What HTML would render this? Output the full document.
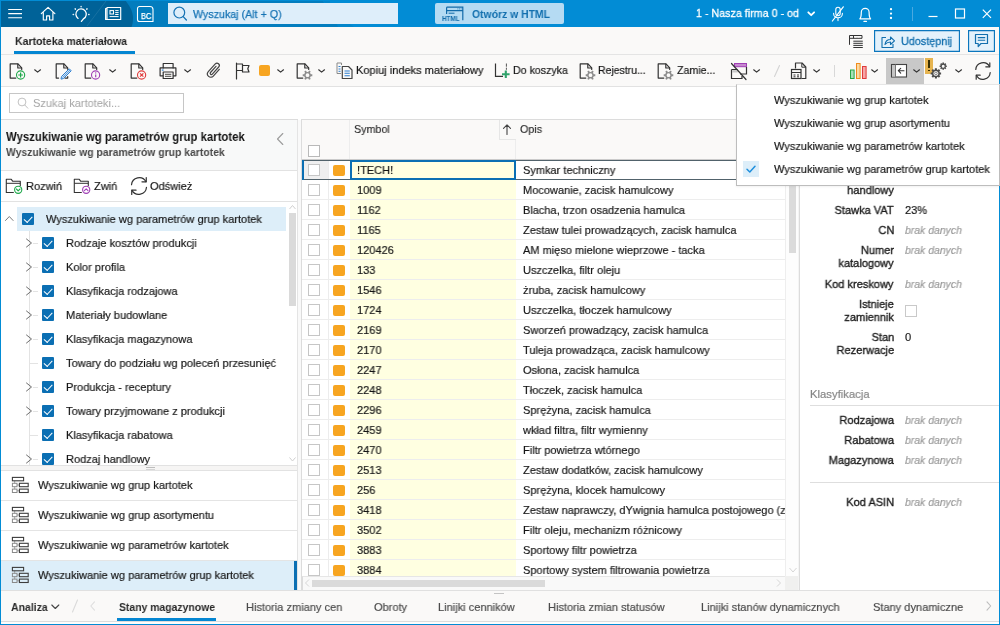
<!DOCTYPE html>
<html lang="pl">
<head>
<meta charset="utf-8">
<title>Kartoteka materiałowa</title>
<style>
*{box-sizing:border-box;margin:0;padding:0}
html,body{width:1000px;height:625px;overflow:hidden;background:#fff}
body{font-family:"Liberation Sans",sans-serif;font-size:12px;color:#151515;position:relative}
.abs{position:absolute}
#win{position:absolute;left:0;top:0;width:1000px;height:625px;background:#fff;overflow:hidden}
.tx{will-change:transform;position:absolute;line-height:16px;white-space:nowrap;transform-origin:0 50%;display:block}
.cb{position:absolute;width:12px;height:12px;background:#0b6fb3;border-radius:1px}
.cb:after{content:"";position:absolute;left:2.4px;top:2.5px;width:7px;height:3.7px;border-left:1.7px solid #fff;border-bottom:1.7px solid #fff;transform:rotate(-47deg)}
.ub{position:absolute;width:12px;height:12px;background:#fff;border:1px solid #c6c6c6}
.or{position:absolute;width:12px;height:11px;background:#f7a521;border-radius:2px}

</style>
</head>
<body>
<div id="win">
<div class="abs" style="left:0px;top:0px;width:1000px;height:27px;background:#028cd5"></div>
<svg class="abs" style="left:0px;top:0px;" width="360" height="27" viewBox="0 0 360 27" fill="none"><path d="M322 0C330 8 344 20 354 27H330V0Z" fill="#0285ca"/><path d="M0 0H322C328 8 334 18 338 27H0Z" fill="#037dbe"/><path d="M0 0H125C129 5 133 11 133 18C133 22 132.500 25 131.500 27H0Z" fill="#006298"/></svg>
<svg class="abs" style="left:7px;top:7px;" width="17" height="14" viewBox="0 0 17 14" fill="none"><path d="M1.200 2.500H15M1.200 6.600H15M1.200 10.700H15" stroke="#fff" stroke-width="1.100"/></svg>
<svg class="abs" style="left:39px;top:5px;" width="18" height="17" viewBox="0 0 18 17" fill="none"><path d="M2.300 8.700L9.100 2.300L15.900 8.700M4.300 7.300V15H7.600V10.800H10.600V15H13.900V7.300" stroke="#fff" stroke-width="1.150" stroke-linecap="round" stroke-linejoin="round"/></svg>
<svg class="abs" style="left:70px;top:3px;" width="22" height="21" viewBox="0 0 22 21" fill="none"><path d="M11.400 18.400L13.700 15.600A5.200 5.200 0 1 0 8.100 15.400" stroke="#fff" stroke-width="1.250" stroke-linecap="round"/><path d="M11.100 3.500V3.800M5.200 5.900L5.400 6.100M17 5.900L16.800 6.100M3.200 11.400H3.500M18.700 11.400H19" stroke="#fff" stroke-width="1.500" stroke-linecap="round" opacity="0.9"/></svg>
<svg class="abs" style="left:84px;top:0px;" width="24" height="27" viewBox="0 0 24 27" fill="none"><path d="M22 1L3 26" stroke="#fff" stroke-width="1" opacity="0.090"/></svg>
<svg class="abs" style="left:104px;top:5px;" width="19" height="17" viewBox="0 0 19 17" fill="none"><path d="M3 3.500H1.600V14.500H16.700V2.500H3V14.300" stroke="#fff" stroke-width="1.150" stroke-linejoin="round"/><rect x="6" y="5.600" width="3.500" height="3.400" stroke="#fff" stroke-width="1.050"/><path d="M11.200 5.600H14.600M11.200 7.600H14.600M11.200 9.500H14.600M5.600 11.600H14.600" stroke="#fff" stroke-width="1"/></svg>
<svg class="abs" style="left:136px;top:5px;" width="18" height="18" viewBox="0 0 18 18" fill="none"><path d="M3.500 1.500H14A3 3 0 0 1 17 4.500V16.500H3.500A2 2 0 0 1 1.500 14.500V3.500A2 2 0 0 1 3.500 1.500Z" stroke="#fff" stroke-width="1.100"/></svg>
<span class="tx" style="top:8.29px;font-size:8.8px;color:#fff;-webkit-text-stroke:0.25px;left:141.30px;transform:scaleX(0.86);">BC</span>
<div class="abs" style="left:168px;top:3px;width:230px;height:21px;background:#deeefa"></div>
<svg class="abs" style="left:171px;top:5px;" width="18" height="18" viewBox="0 0 18 18" fill="none"><circle cx="8.3" cy="7.6" r="5.4" stroke="#1673b4" stroke-width="1.2"/><path d="M12.2 11.6L15.4 15" stroke="#1673b4" stroke-width="1.3" stroke-linecap="round"/></svg>
<span class="tx" style="top:6.26px;font-size:11.33px;color:#1673b4;-webkit-text-stroke:0.25px;left:192.50px;transform:scaleX(0.9428);">Wyszukaj (Alt + Q)</span>
<div class="abs" style="left:435px;top:3px;width:129px;height:21px;background:#b5dbf3;border-radius:2px"></div>
<svg class="abs" style="left:441px;top:5px;" width="24" height="18" viewBox="0 0 24 18" fill="none"><path d="M5.600 2.200H21.800V15.200M5.600 2.200V9M5.600 5.600H21.800" stroke="#126aa8" stroke-width="1.200"/><path d="M16.500 3.900H17.300M18.100 3.900H18.900M19.700 3.900H20.500" stroke="#126aa8" stroke-width="0.900"/><path d="M7.600 8.200H13.500" stroke="#126aa8" stroke-width="1"/></svg>
<span class="tx" style="top:11.29px;font-size:7px;font-weight:bold;color:#126aa8;left:442.30px;transform:scaleX(0.9);">HTML</span>
<span class="tx" style="top:6.26px;font-size:11.33px;font-weight:bold;color:#126fae;left:472.00px;transform:scaleX(0.9184);">Otwórz w HTML</span>
<span class="tx" style="top:5.26px;font-size:11.33px;color:#fff;-webkit-text-stroke:0.3px;left:695.50px;transform:scaleX(0.946);">1 - Nasza firma 0 - od</span>
<svg class="abs" style="left:806px;top:9px;" width="12" height="10" viewBox="0 0 12 10" fill="none"><path d="M2.300 3.300L5.200 6.200L8.100 3.300" stroke="#fff" stroke-width="1.800" stroke-linecap="round" stroke-linejoin="round"/></svg>
<svg class="abs" style="left:828px;top:4px;" width="20" height="20" viewBox="0 0 20 20" fill="none"><path d="M10 3.2A2.2 2.2 0 0 1 12.2 5.400V9.6A2.200 2.200 0 0 1 7.800 9.6V5.400A2.200 2.200 0 0 1 10 3.200ZM5.600 9.400A4.400 4.400 0 0 0 14.400 9.400M10 14V16.6" stroke="#fff" stroke-width="1.1" stroke-linecap="round"/><path d="M15.300 2.800L4.400 17" stroke="#fff" stroke-width="1.2" stroke-linecap="round"/></svg>
<svg class="abs" style="left:856px;top:4px;" width="20" height="20" viewBox="0 0 20 20" fill="none"><path d="M3.800 14.800C5.300 13.300 5.300 11.500 5.300 8.200A3.900 3.900 0 0 1 13.100 8.200C13.100 11.500 13.100 13.300 14.600 14.800Z" stroke="#fff" stroke-width="1.200" stroke-linejoin="round"/><path d="M8 17.400H10.400" stroke="#fff" stroke-width="1.300" stroke-linecap="round"/></svg>
<svg class="abs" style="left:886px;top:5px;" width="10" height="18" viewBox="0 0 10 18" fill="none"><circle cx="5" cy="4.200" r="1.150" fill="#fff"/><circle cx="5" cy="8.600" r="1.150" fill="#fff"/><circle cx="5" cy="13" r="1.150" fill="#fff"/></svg>
<div class="abs" style="left:912px;top:7px;width:1px;height:14px;background:#4aa9e0"></div>
<svg class="abs" style="left:926px;top:6px;" width="16" height="16" viewBox="0 0 16 16" fill="none"><path d="M2.500 10.500H11.500" stroke="#fff" stroke-width="1.2"/></svg>
<svg class="abs" style="left:952px;top:6px;" width="16" height="16" viewBox="0 0 16 16" fill="none"><rect x="3.500" y="3" width="9" height="9" stroke="#fff" stroke-width="1.2"/></svg>
<svg class="abs" style="left:979px;top:6px;" width="16" height="16" viewBox="0 0 16 16" fill="none"><path d="M3.800 3.600L12 11.800M12 3.600L3.800 11.800" stroke="#fff" stroke-width="1.200"/></svg>
<div class="abs" style="left:0px;top:27px;width:1000px;height:28px;background:#faf9f8;border-bottom:1px solid #e4e4e4"></div>
<span class="tx" style="top:33.26px;font-size:11.33px;font-weight:bold;color:#242424;left:15.00px;transform:scaleX(0.9269);">Kartoteka materiałowa</span>
<div class="abs" style="left:14px;top:51px;width:121px;height:3px;background:#0486d2"></div>
<svg class="abs" style="left:848px;top:33px;" width="16" height="16" viewBox="0 0 16 16" fill="none"><path d="M1.500 2.500V11.800M1.500 2.500H14V5.300H1.500M5.500 2.500V5.300" stroke="#333" stroke-width="1"/><path d="M7 3.900H13" stroke="#faf9f8" stroke-width="1" stroke-dasharray="1.200 1.800"/><path d="M5.300 8.200H14.800M5.300 10.300H14.800M5.300 12.400H14.800M5.300 14.500H14.800" stroke="#333" stroke-width="1"/></svg>
<div class="abs" style="left:874px;top:30px;width:86px;height:22px;box-shadow:inset 0 0 0 1.150px #0b76bd;background:#e3f1fb"></div>
<svg class="abs" style="left:878.8px;top:32.5px;" width="18" height="17" viewBox="0 0 18 17" fill="none"><path d="M7 4.500H3V14.500H14V11" stroke="#126fae" stroke-width="1.1" stroke-linejoin="round"/><path d="M6 11.500C6.500 8 9 6.500 11.500 6.500V4L15.500 7.800L11.500 11.500V9C9 9 7.500 9.800 6 11.500Z" stroke="#126fae" stroke-width="1.1" stroke-linejoin="round"/></svg>
<span class="tx" style="top:33.26px;font-size:11.33px;color:#126fae;-webkit-text-stroke:0.3px;left:901.00px;transform:scaleX(0.9534);">Udostępnij</span>
<div class="abs" style="left:968px;top:30px;width:26.8px;height:22px;box-shadow:inset 0 0 0 1.150px #0b76bd;background:#e3f1fb"></div>
<svg class="abs" style="left:972px;top:32px;" width="19" height="17" viewBox="0 0 19 17" fill="none"><path d="M3.500 2.500H15.500V11.500H9L6.200 14.500V11.500H3.500Z" stroke="#126fae" stroke-width="1.200" stroke-linejoin="round"/><path d="M5.800 5.600H13.200M5.800 8.300H13.200" stroke="#126fae" stroke-width="1.100"/></svg>
<div class="abs" style="left:0px;top:55px;width:1000px;height:32px;background:#faf9f8;border-bottom:1px solid #e2e2e2"></div>
<svg class="abs" style="left:9px;top:62.5px;" width="22" height="19" viewBox="0 0 22 19" fill="none"><path d="M12.700 6.500V4.800L9 0.900H1.200V15.100H6.800" stroke="#333" stroke-width="1.2" stroke-linejoin="round" stroke-linecap="round"/><path d="M8.800 1.100V5H12.500" stroke="#333" stroke-width="1.2" stroke-linejoin="round" stroke-linecap="round" stroke-width="1"/><circle cx="11.600" cy="12" r="4.100" stroke="#1ea84a" stroke-width="1.100" fill="#faf9f8"/><path d="M9.200 12H14M11.600 9.600V14.400" stroke="#1ea84a" stroke-width="1.200"/></svg>
<svg class="abs" style="left:33px;top:68.3px;" width="10" height="6" viewBox="0 0 10 6" fill="none"><path d="M1.700 1.800L4.600 4.100L7.500 1.800" stroke="#333" stroke-width="1.200" stroke-linecap="round" stroke-linejoin="round"/></svg>
<svg class="abs" style="left:55px;top:62.5px;" width="22" height="19" viewBox="0 0 22 19" fill="none"><path d="M12.700 6.300V4.800L9 0.900H1.200V15.100H3.600" stroke="#333" stroke-width="1.2" stroke-linejoin="round" stroke-linecap="round"/><path d="M8.800 1.100V5H12.500" stroke="#333" stroke-width="1.2" stroke-linejoin="round" stroke-linecap="round" stroke-width="1"/><path d="M10 15.100H12.700V13.500" stroke="#333" stroke-width="1.2" stroke-linejoin="round" stroke-linecap="round"/><path d="M6 16.100L6.500 13.500L14.200 5.800L16.200 7.800L8.500 15.500Z" stroke="#2d7fd0" stroke-width="1" stroke-linejoin="round" fill="#cfe3f7"/><path d="M7.600 14.500L15.200 6.800" stroke="#2d7fd0" stroke-width="0.700"/></svg>
<svg class="abs" style="left:84px;top:62.5px;" width="22" height="19" viewBox="0 0 22 19" fill="none"><path d="M12.700 6.500V4.800L9 0.900H1.200V15.100H6.800" stroke="#333" stroke-width="1.2" stroke-linejoin="round" stroke-linecap="round"/><path d="M8.800 1.100V5H12.500" stroke="#333" stroke-width="1.2" stroke-linejoin="round" stroke-linecap="round" stroke-width="1"/><circle cx="11.600" cy="12" r="4.100" stroke="#a03fb5" stroke-width="1.100" fill="#faf9f8"/><path d="M11.700 11.500V14.300" stroke="#a03fb5" stroke-width="1.200"/><circle cx="11.700" cy="9.900" r="0.700" fill="#a03fb5"/></svg>
<svg class="abs" style="left:108px;top:68.3px;" width="10" height="6" viewBox="0 0 10 6" fill="none"><path d="M1.700 1.800L4.600 4.100L7.500 1.800" stroke="#333" stroke-width="1.200" stroke-linecap="round" stroke-linejoin="round"/></svg>
<svg class="abs" style="left:130px;top:62.5px;" width="22" height="19" viewBox="0 0 22 19" fill="none"><path d="M12.700 6.500V4.800L9 0.900H1.200V15.100H6.800" stroke="#333" stroke-width="1.2" stroke-linejoin="round" stroke-linecap="round"/><path d="M8.800 1.100V5H12.500" stroke="#333" stroke-width="1.2" stroke-linejoin="round" stroke-linecap="round" stroke-width="1"/><circle cx="11.600" cy="12" r="4.100" stroke="#e03a3a" stroke-width="1.100" fill="#faf9f8"/><path d="M10 10.300L13.400 13.700M13.400 10.300L10 13.700" stroke="#e03a3a" stroke-width="1.200"/></svg>
<svg class="abs" style="left:159px;top:61px;" width="20" height="19" viewBox="0 0 20 19" fill="none"><path d="M4.200 6.900V2.500H14.100V6.900" stroke="#333" stroke-width="1.2" stroke-linejoin="round" stroke-linecap="round"/><rect x="1.100" y="6.900" width="15.800" height="7.900" stroke="#333" stroke-width="1.2" stroke-linejoin="round" stroke-linecap="round"/><rect x="4.200" y="11" width="9.900" height="6.500" stroke="#333" stroke-width="1.2" stroke-linejoin="round" stroke-linecap="round" fill="#faf9f8"/><path d="M6 13.300H12.300M6 15.300H12.300" stroke="#333" stroke-width="0.900"/><path d="M2.800 9.100H4.600" stroke="#2d7fd0" stroke-width="1.200"/></svg>
<svg class="abs" style="left:182.5px;top:68.3px;" width="10" height="6" viewBox="0 0 10 6" fill="none"><path d="M1.700 1.800L4.600 4.100L7.500 1.800" stroke="#333" stroke-width="1.200" stroke-linecap="round" stroke-linejoin="round"/></svg>
<svg class="abs" style="left:204px;top:60px;" width="20" height="21" viewBox="0 0 20 21" fill="none"><path d="M15.300 9.300L9.300 16.100A3.300 3.300 0 0 1 4.300 11.700L11.300 3.900A2.300 2.300 0 0 1 14.700 7L8.300 14.100A1.200 1.200 0 0 1 6.500 12.500L12 6.300" stroke="#444" stroke-width="1.200" stroke-linecap="round" stroke-linejoin="round"/></svg>
<svg class="abs" style="left:234px;top:61px;" width="19" height="20" viewBox="0 0 19 20" fill="none"><path d="M2.500 2V18M2.500 3H8.500V4.500H15L13.800 7.700L15 11H8.500V9.500H2.500M8.500 4.500V9.500" stroke="#333" stroke-width="1.200" stroke-linejoin="round" stroke-linecap="round"/></svg>
<div class="abs" style="left:259px;top:65px;width:11px;height:11px;background:#f7a521;border-radius:2px"></div>
<svg class="abs" style="left:275.5px;top:68.3px;" width="10" height="6" viewBox="0 0 10 6" fill="none"><path d="M1.700 1.800L4.600 4.100L7.500 1.800" stroke="#333" stroke-width="1.200" stroke-linecap="round" stroke-linejoin="round"/></svg>
<svg class="abs" style="left:296px;top:62.5px;" width="22" height="19" viewBox="0 0 22 19" fill="none"><path d="M12.700 6.500V4.800L9 0.900H1.200V15.100H6.800" stroke="#333" stroke-width="1.2" stroke-linejoin="round" stroke-linecap="round"/><path d="M8.800 1.100V5H12.500" stroke="#333" stroke-width="1.2" stroke-linejoin="round" stroke-linecap="round" stroke-width="1"/><g transform="translate(11.500,12.200)" stroke="#8c8c8c"><path d="M-4.800 0H4.800M-2.400 -4.160L2.400 4.160M-2.400 4.160L2.400 -4.160" stroke-width="1.900"/><circle r="2.600" fill="#faf9f8" stroke-width="1.400"/></g></svg>
<svg class="abs" style="left:316.8px;top:68.3px;" width="10" height="6" viewBox="0 0 10 6" fill="none"><path d="M1.700 1.800L4.600 4.100L7.500 1.800" stroke="#333" stroke-width="1.200" stroke-linecap="round" stroke-linejoin="round"/></svg>
<svg class="abs" style="left:335px;top:61px;" width="20" height="20" viewBox="0 0 20 20" fill="none"><path d="M6.500 4V2H2V12.500H6" stroke="#8a8a8a" stroke-width="1"/><path d="M3.500 5.500H5.500M3.500 8H5.500M3.500 10.300H5.500" stroke="#2d7fd0" stroke-width="1"/><path d="M7.300 5.500H13.500L17 9V17.500H7.300Z" stroke="#444" stroke-width="1.200" stroke-linejoin="round" fill="#faf9f8"/><path d="M9.500 10H14.800M9.500 12.300H14.800M9.500 14.700H14.800" stroke="#2d7fd0" stroke-width="1.100"/></svg>
<span class="tx" style="top:62.26px;font-size:11.33px;-webkit-text-stroke:0.18px;left:356.40px;transform:scaleX(0.9735);">Kopiuj indeks materiałowy</span>
<svg class="abs" style="left:493px;top:61px;" width="20" height="20" viewBox="0 0 20 20" fill="none"><path d="M2.500 2.500V15.400H10" stroke="#333" stroke-width="1.200"/><path d="M13.400 2.500V8.800" stroke="#555" stroke-width="1" stroke-dasharray="3.200 1"/><path d="M9 13.200H16.600M12.800 9.400V17" stroke="#2fa36b" stroke-width="2.100"/></svg>
<span class="tx" style="top:62.26px;font-size:11.33px;-webkit-text-stroke:0.18px;left:513.30px;transform:scaleX(0.9375);">Do koszyka</span>
<svg class="abs" style="left:578.5px;top:62.5px;" width="22" height="19" viewBox="0 0 22 19" fill="none"><path d="M12.700 6.500V4.800L9 0.900H1.200V15.100H6.800" stroke="#333" stroke-width="1.2" stroke-linejoin="round" stroke-linecap="round"/><path d="M8.800 1.100V5H12.500" stroke="#333" stroke-width="1.2" stroke-linejoin="round" stroke-linecap="round" stroke-width="1"/><g transform="translate(11.500,12.200)" stroke="#8c8c8c"><path d="M-4.800 0H4.800M-2.400 -4.160L2.400 4.160M-2.400 4.160L2.400 -4.160" stroke-width="1.900"/><circle r="2.600" fill="#faf9f8" stroke-width="1.400"/></g></svg>
<span class="tx" style="top:62.26px;font-size:11.33px;-webkit-text-stroke:0.18px;left:598.00px;transform:scaleX(0.9237);">Rejestru...</span>
<svg class="abs" style="left:657px;top:62.5px;" width="22" height="19" viewBox="0 0 22 19" fill="none"><path d="M12.700 6.500V4.800L9 0.900H1.200V15.100H6.800" stroke="#333" stroke-width="1.2" stroke-linejoin="round" stroke-linecap="round"/><path d="M8.800 1.100V5H12.500" stroke="#333" stroke-width="1.2" stroke-linejoin="round" stroke-linecap="round" stroke-width="1"/><g transform="translate(11.500,12.200)" stroke="#8c8c8c"><path d="M-4.800 0H4.800M-2.400 -4.160L2.400 4.160M-2.400 4.160L2.400 -4.160" stroke-width="1.900"/><circle r="2.600" fill="#faf9f8" stroke-width="1.400"/></g></svg>
<span class="tx" style="top:62.26px;font-size:11.33px;-webkit-text-stroke:0.18px;left:677.00px;transform:scaleX(0.9375);">Zamie...</span>
<svg class="abs" style="left:729px;top:61px;" width="21" height="21" viewBox="0 0 21 21" fill="none"><rect x="5.500" y="2.500" width="12" height="3.200" fill="#c689d0" stroke="#a03fb5" stroke-width="1"/><path d="M17.500 6V13H11" stroke="#333" stroke-width="1.200"/><path d="M2.500 8.500H8.500M2.500 8.500V17.500H13V15" stroke="#333" stroke-width="1.200"/><rect x="3.200" y="9.200" width="5.500" height="2.300" fill="#c9c9c9"/><path d="M2.500 2.500L17 18.500" stroke="#333" stroke-width="1.200" stroke-linecap="round"/></svg>
<svg class="abs" style="left:751.5px;top:68.3px;" width="10" height="6" viewBox="0 0 10 6" fill="none"><path d="M1.700 1.800L4.600 4.100L7.500 1.800" stroke="#333" stroke-width="1.200" stroke-linecap="round" stroke-linejoin="round"/></svg>
<svg class="abs" style="left:772px;top:64px;" width="10" height="14" viewBox="0 0 10 14" fill="none"><path d="M7.500 1.500L2.500 12.500" stroke="#d4d4d4" stroke-width="1.100" stroke-linecap="round"/></svg>
<svg class="abs" style="left:789px;top:61px;" width="20" height="20" viewBox="0 0 20 20" fill="none"><path d="M6.500 7.500V2H13L16.800 6V17.500H12.500" stroke="#333" stroke-width="1.200" stroke-linejoin="round"/><path d="M12.800 2.200V6.200H16.600" stroke="#333" stroke-width="1" stroke-linejoin="round"/><rect x="2.500" y="8.500" width="9.500" height="9" stroke="#333" stroke-width="1.200" fill="#faf9f8"/><path d="M2.500 11.500H12M4.500 14H6.500M8 14H10M4.500 15.800H6.500M8 15.800H10" stroke="#333" stroke-width="1"/></svg>
<svg class="abs" style="left:811.5px;top:68.3px;" width="10" height="6" viewBox="0 0 10 6" fill="none"><path d="M1.700 1.800L4.600 4.100L7.500 1.800" stroke="#333" stroke-width="1.200" stroke-linecap="round" stroke-linejoin="round"/></svg>
<div class="abs" style="left:834px;top:65px;width:1px;height:12px;background:#d8d8d8"></div>
<svg class="abs" style="left:849px;top:62px;" width="19" height="18" viewBox="0 0 19 18" fill="none"><rect x="1.500" y="8" width="3.600" height="8.500" fill="#a8e0b7" stroke="#28a745" stroke-width="1"/><rect x="7.500" y="1.500" width="3.600" height="15" fill="#fbd9a0" stroke="#f08c1e" stroke-width="1"/><rect x="13.500" y="4.500" width="3.600" height="12" fill="#f6a6a6" stroke="#e03a3a" stroke-width="1"/></svg>
<svg class="abs" style="left:870px;top:68.3px;" width="10" height="6" viewBox="0 0 10 6" fill="none"><path d="M1.700 1.800L4.600 4.100L7.500 1.800" stroke="#333" stroke-width="1.200" stroke-linecap="round" stroke-linejoin="round"/></svg>
<div class="abs" style="left:886px;top:58px;width:37.5px;height:26.5px;background:#c8c8c8"></div>
<svg class="abs" style="left:889px;top:62px;" width="20" height="18" viewBox="0 0 20 18" fill="none"><rect x="2.500" y="2.500" width="15" height="12.500" fill="#fff" stroke="#444" stroke-width="1.100"/><rect x="3" y="3" width="3.500" height="11.500" fill="#c4c4c4"/><path d="M6.500 2.500V15" stroke="#777" stroke-width="1"/><path d="M15 8.700H9.500M11.700 6.300L9.300 8.700L11.700 11.100" stroke="#333" stroke-width="1.100" stroke-linecap="round" stroke-linejoin="round"/></svg>
<svg class="abs" style="left:911.5px;top:68.3px;" width="10" height="6" viewBox="0 0 10 6" fill="none"><path d="M1.700 1.800L4.600 4.100L7.500 1.800" stroke="#333" stroke-width="1.200" stroke-linecap="round" stroke-linejoin="round"/></svg>
<div class="abs" style="left:925px;top:58px;width:8px;height:15.5px;background:#e6b450"></div>
<div class="abs" style="left:928.3px;top:60px;width:1.7px;height:8px;background:#3a3000"></div>
<div class="abs" style="left:928.3px;top:69.5px;width:1.7px;height:1.8px;background:#3a3000"></div>
<svg class="abs" style="left:930px;top:61px;" width="19" height="20" viewBox="0 0 19 20" fill="none"><g stroke="#4c4c4c" fill="none"><g transform="translate(5.900,12.400)"><path d="M0 -5.200V5.200M-5.200 0H5.200M-3.680 -3.680L3.680 3.680M-3.680 3.680L3.680 -3.680" stroke-width="2"/><circle r="3.200" fill="#faf9f8" stroke-width="1.500"/><circle r="1.300" fill="#faf9f8" stroke-width="0.600"/></g><g transform="translate(13.200,5.200)"><path d="M0 -3.600V3.600M-3.600 0H3.600M-2.550 -2.550L2.550 2.550M-2.550 2.550L2.550 -2.550" stroke-width="1.600"/><circle r="2.100" fill="#faf9f8" stroke-width="1.200"/></g></g></svg>
<svg class="abs" style="left:953.5px;top:68.3px;" width="10" height="6" viewBox="0 0 10 6" fill="none"><path d="M1.700 1.800L4.600 4.100L7.500 1.800" stroke="#333" stroke-width="1.200" stroke-linecap="round" stroke-linejoin="round"/></svg>
<svg class="abs" style="left:973px;top:61px;" width="20" height="20" viewBox="0 0 20 20" fill="none"><path d="M2.800 8.500A7.300 7.300 0 0 1 16.500 5.500M17.200 11.500A7.300 7.300 0 0 1 3.500 14.500" stroke="#333" stroke-width="1.200" stroke-linecap="round"/><path d="M16.800 1.800V5.800H12.800M3.200 18.200V14.200H7.200" stroke="#333" stroke-width="1.200" stroke-linecap="round" stroke-linejoin="round"/></svg>
<div class="abs" style="left:0px;top:87px;width:1000px;height:33px;background:#fff"></div>
<div class="abs" style="left:9px;top:93px;width:175px;height:20px;border:1px solid #c6c6c6;background:#fff"></div>
<svg class="abs" style="left:16px;top:96px;" width="14" height="14" viewBox="0 0 14 14" fill="none"><circle cx="6" cy="6" r="3.900" stroke="#c2c2c2" stroke-width="1"/><path d="M8.800 9L11.800 12.200" stroke="#c2c2c2" stroke-width="1" stroke-linecap="round"/></svg>
<span class="tx" style="top:94.66px;font-size:11.33px;color:#a6a6a6;-webkit-text-stroke:0.05px;left:33.00px;transform:scaleX(0.9746);">Szukaj kartoteki...</span>
<div class="abs" style="left:0px;top:119px;width:298px;height:52px;background:#f8f9f9;border-top:1px solid #dcdcdc;border-bottom:1px solid #e2e2e2"></div>
<span class="tx" style="top:128.84px;font-size:12.6px;font-weight:bold;color:#141414;left:6.30px;transform:scaleX(0.901);">Wyszukiwanie wg parametrów grup kartotek</span>
<span class="tx" style="top:144.27px;font-size:11.3px;font-weight:bold;color:#484848;left:6.30px;transform:scaleX(0.92);">Wyszukiwanie wg parametrów grup kartotek</span>
<svg class="abs" style="left:274.3px;top:131px;" width="12" height="16" viewBox="0 0 12 16" fill="none"><path d="M8.800 2.500L3.500 8L8.800 13.500" stroke="#9c9c9c" stroke-width="1.100" stroke-linecap="round" stroke-linejoin="round"/></svg>
<div class="abs" style="left:0px;top:171px;width:298px;height:31px;background:#fff;border-bottom:1px solid #e2e2e2"></div>
<svg class="abs" style="left:5px;top:177px;" width="20" height="19" viewBox="0 0 20 19" fill="none"><path d="M15.300 9V4.300H7.800L6.300 2.300H1.300V15.500H8.800" stroke="#333" stroke-width="1.100" stroke-linejoin="round"/><path d="M1.300 6.300H15.300" stroke="#333" stroke-width="1"/><g transform="translate(13.200,12.800)"><circle r="3.600" stroke="#1ea84a" stroke-width="1.100" fill="#fff"/><path d="M-1.800 -0.800L0 1L1.800 -0.800" stroke="#1ea84a" stroke-width="1.100" stroke-linecap="round" stroke-linejoin="round"/></g></svg>
<span class="tx" style="top:177.66px;font-size:11.33px;-webkit-text-stroke:0.18px;left:25.50px;transform:scaleX(0.9746);">Rozwiń</span>
<svg class="abs" style="left:73px;top:177px;" width="20" height="19" viewBox="0 0 20 19" fill="none"><path d="M15.300 9V4.300H7.800L6.300 2.300H1.300V15.500H8.800" stroke="#333" stroke-width="1.100" stroke-linejoin="round"/><path d="M1.300 6.300H15.300" stroke="#333" stroke-width="1"/><g transform="translate(13.200,12.800)"><circle r="3.600" stroke="#a03fb5" stroke-width="1.100" fill="#fff"/><path d="M-1.800 0.800L0 -1L1.800 0.800" stroke="#a03fb5" stroke-width="1.100" stroke-linecap="round" stroke-linejoin="round"/></g></svg>
<span class="tx" style="top:177.66px;font-size:11.33px;-webkit-text-stroke:0.18px;left:93.70px;transform:scaleX(0.9746);">Zwiń</span>
<svg class="abs" style="left:128px;top:175px;" width="22" height="22" viewBox="0 0 20 20" fill="none"><path d="M3.200 8.800A7 7 0 0 1 16.300 6M16.800 11.200A7 7 0 0 1 3.700 14" stroke="#333" stroke-width="1.100" stroke-linecap="round"/><path d="M16.600 2.300V6.200H12.700M3.400 17.700V13.800H7.300" stroke="#333" stroke-width="1.100" stroke-linecap="round" stroke-linejoin="round"/></svg>
<span class="tx" style="top:177.66px;font-size:11.33px;-webkit-text-stroke:0.18px;left:149.50px;transform:scaleX(0.9746);">Odśwież</span>
<div class="abs" style="left:0;top:0;width:298px;height:465px;overflow:hidden;clip-path:inset(202px 0 0 0)"><div class="abs" style="left:17px;top:207px;width:269px;height:24px;background:#ddeef9"></div><div class="abs" style="left:29px;top:231px;width:1px;height:235px;background:#e3e3e3"></div><svg class="abs" style="left:4px;top:214px;" width="11" height="9" viewBox="0 0 11 9" fill="none"><path d="M1.500 6.500L5.300 2.500L9.100 6.500" stroke="#7a7a7a" stroke-width="1" stroke-linecap="round" stroke-linejoin="round"/></svg><div class="cb" style="left:22px;top:213px"></div><span class="tx" style="top:211.26px;font-size:11.33px;-webkit-text-stroke:0.18px;left:45.70px;transform:scaleX(0.9746);">Wyszukiwanie wg parametrów grup kartotek</span><div class="abs" style="left:33px;top:243px;width:5px;height:1px;background:#e3e3e3"></div><svg class="abs" style="left:24px;top:237px;" width="10" height="12" viewBox="0 0 10 12" fill="none"><path d="M2.500 2L7.500 6L2.500 10" stroke="#6e6e6e" stroke-width="1" stroke-linecap="round" stroke-linejoin="round"/></svg><div class="cb" style="left:42px;top:237px"></div><span class="tx" style="top:235.26px;font-size:11.33px;-webkit-text-stroke:0.18px;left:65.70px;transform:scaleX(0.9746);">Rodzaje kosztów produkcji</span><div class="abs" style="left:33px;top:267px;width:5px;height:1px;background:#e3e3e3"></div><svg class="abs" style="left:24px;top:261px;" width="10" height="12" viewBox="0 0 10 12" fill="none"><path d="M2.500 2L7.500 6L2.500 10" stroke="#6e6e6e" stroke-width="1" stroke-linecap="round" stroke-linejoin="round"/></svg><div class="cb" style="left:42px;top:261px"></div><span class="tx" style="top:259.26px;font-size:11.33px;-webkit-text-stroke:0.18px;left:65.70px;transform:scaleX(0.9746);">Kolor profila</span><div class="abs" style="left:33px;top:291px;width:5px;height:1px;background:#e3e3e3"></div><svg class="abs" style="left:24px;top:285px;" width="10" height="12" viewBox="0 0 10 12" fill="none"><path d="M2.500 2L7.500 6L2.500 10" stroke="#6e6e6e" stroke-width="1" stroke-linecap="round" stroke-linejoin="round"/></svg><div class="cb" style="left:42px;top:285px"></div><span class="tx" style="top:283.26px;font-size:11.33px;-webkit-text-stroke:0.18px;left:65.70px;transform:scaleX(0.9746);">Klasyfikacja rodzajowa</span><div class="abs" style="left:33px;top:315px;width:5px;height:1px;background:#e3e3e3"></div><svg class="abs" style="left:24px;top:309px;" width="10" height="12" viewBox="0 0 10 12" fill="none"><path d="M2.500 2L7.500 6L2.500 10" stroke="#6e6e6e" stroke-width="1" stroke-linecap="round" stroke-linejoin="round"/></svg><div class="cb" style="left:42px;top:309px"></div><span class="tx" style="top:307.26px;font-size:11.33px;-webkit-text-stroke:0.18px;left:65.70px;transform:scaleX(0.9746);">Materiały budowlane</span><div class="abs" style="left:33px;top:339px;width:5px;height:1px;background:#e3e3e3"></div><svg class="abs" style="left:24px;top:333px;" width="10" height="12" viewBox="0 0 10 12" fill="none"><path d="M2.500 2L7.500 6L2.500 10" stroke="#6e6e6e" stroke-width="1" stroke-linecap="round" stroke-linejoin="round"/></svg><div class="cb" style="left:42px;top:333px"></div><span class="tx" style="top:331.26px;font-size:11.33px;-webkit-text-stroke:0.18px;left:65.70px;transform:scaleX(0.9746);">Klasyfikacja magazynowa</span><div class="abs" style="left:29px;top:363px;width:9px;height:1px;background:#e3e3e3"></div><div class="cb" style="left:42px;top:357px"></div><span class="tx" style="top:355.26px;font-size:11.33px;-webkit-text-stroke:0.18px;left:65.70px;transform:scaleX(0.9746);">Towary do podziału wg poleceń przesunięć</span><div class="abs" style="left:33px;top:387px;width:5px;height:1px;background:#e3e3e3"></div><svg class="abs" style="left:24px;top:381px;" width="10" height="12" viewBox="0 0 10 12" fill="none"><path d="M2.500 2L7.500 6L2.500 10" stroke="#6e6e6e" stroke-width="1" stroke-linecap="round" stroke-linejoin="round"/></svg><div class="cb" style="left:42px;top:381px"></div><span class="tx" style="top:379.26px;font-size:11.33px;-webkit-text-stroke:0.18px;left:65.70px;transform:scaleX(0.9746);">Produkcja - receptury</span><div class="abs" style="left:33px;top:411px;width:5px;height:1px;background:#e3e3e3"></div><svg class="abs" style="left:24px;top:405px;" width="10" height="12" viewBox="0 0 10 12" fill="none"><path d="M2.500 2L7.500 6L2.500 10" stroke="#6e6e6e" stroke-width="1" stroke-linecap="round" stroke-linejoin="round"/></svg><div class="cb" style="left:42px;top:405px"></div><span class="tx" style="top:403.26px;font-size:11.33px;-webkit-text-stroke:0.18px;left:65.70px;transform:scaleX(0.9746);">Towary przyjmowane z produkcji</span><div class="abs" style="left:29px;top:435px;width:9px;height:1px;background:#e3e3e3"></div><div class="cb" style="left:42px;top:429px"></div><span class="tx" style="top:427.26px;font-size:11.33px;-webkit-text-stroke:0.18px;left:65.70px;transform:scaleX(0.9746);">Klasyfikacja rabatowa</span><div class="abs" style="left:33px;top:459px;width:5px;height:1px;background:#e3e3e3"></div><svg class="abs" style="left:24px;top:453px;" width="10" height="12" viewBox="0 0 10 12" fill="none"><path d="M2.500 2L7.500 6L2.500 10" stroke="#6e6e6e" stroke-width="1" stroke-linecap="round" stroke-linejoin="round"/></svg><div class="cb" style="left:42px;top:453px"></div><span class="tx" style="top:451.26px;font-size:11.33px;-webkit-text-stroke:0.18px;left:65.70px;transform:scaleX(0.9746);">Rodzaj handlowy</span><div class="abs" style="left:288.5px;top:212.5px;width:7.5px;height:93px;background:#dadada"></div><svg class="abs" style="left:288px;top:203px;" width="9" height="8" viewBox="0 0 9 8" fill="none"><path d="M1.500 6L4.500 2.500L7.500 6" stroke="#d0d0d0" stroke-width="1"/></svg><svg class="abs" style="left:288px;top:455px;" width="9" height="8" viewBox="0 0 9 8" fill="none"><path d="M1.500 2.500L4.500 6L7.500 2.500" stroke="#d0d0d0" stroke-width="1"/></svg></div>
<div class="abs" style="left:0px;top:465px;width:298px;height:6px;background:#f6f5f4;border-top:1px solid #e2e2e2;border-bottom:1px solid #e2e2e2"></div>
<div class="abs" style="left:146px;top:467px;width:9px;height:1px;background:#bdbdbd"></div>
<div class="abs" style="left:146px;top:469px;width:9px;height:1px;background:#d5d5d5"></div>
<div class="abs" style="left:0px;top:471px;width:298px;height:30px;background:#fff;border-bottom:1px solid #e4e4e4;"></div>
<svg class="abs" style="left:10px;top:476px;" width="20" height="18" viewBox="0 0 20 18" fill="none"><path d="M4.700 4.800V7.300M4.700 10.700V13.100M7 9H9.400M7 14.800H9.400" stroke="#9a9a9a" stroke-width="0.900"/><rect x="2.400" y="1.400" width="11.200" height="3.400" stroke="#3c3c3c" stroke-width="1.100"/><rect x="2.400" y="7.300" width="4.600" height="3.400" stroke="#8a8a8a" stroke-width="1"/><rect x="9.400" y="7.300" width="8.800" height="3.400" stroke="#3c3c3c" stroke-width="1.100"/><rect x="2.400" y="13.100" width="4.600" height="3.400" stroke="#8a8a8a" stroke-width="1"/><rect x="9.400" y="13.100" width="8.800" height="3.400" stroke="#3c3c3c" stroke-width="1.100"/></svg>
<span class="tx" style="top:477.26px;font-size:11.33px;-webkit-text-stroke:0.18px;left:38.30px;transform:scaleX(0.9746);">Wyszukiwanie wg grup kartotek</span>
<div class="abs" style="left:0px;top:501px;width:298px;height:30px;background:#fff;border-bottom:1px solid #e4e4e4;"></div>
<svg class="abs" style="left:10px;top:506px;" width="20" height="18" viewBox="0 0 20 18" fill="none"><path d="M4.700 4.800V7.300M4.700 10.700V13.100M7 9H9.400M7 14.800H9.400" stroke="#9a9a9a" stroke-width="0.900"/><rect x="2.400" y="1.400" width="11.200" height="3.400" stroke="#3c3c3c" stroke-width="1.100"/><rect x="2.400" y="7.300" width="4.600" height="3.400" stroke="#8a8a8a" stroke-width="1"/><rect x="9.400" y="7.300" width="8.800" height="3.400" stroke="#3c3c3c" stroke-width="1.100"/><rect x="2.400" y="13.100" width="4.600" height="3.400" stroke="#8a8a8a" stroke-width="1"/><rect x="9.400" y="13.100" width="8.800" height="3.400" stroke="#3c3c3c" stroke-width="1.100"/></svg>
<span class="tx" style="top:507.26px;font-size:11.33px;-webkit-text-stroke:0.18px;left:38.30px;transform:scaleX(0.9746);">Wyszukiwanie wg grup asortymentu</span>
<div class="abs" style="left:0px;top:531px;width:298px;height:30px;background:#fff;border-bottom:1px solid #e4e4e4;"></div>
<svg class="abs" style="left:10px;top:536px;" width="20" height="18" viewBox="0 0 20 18" fill="none"><path d="M4.700 4.800V7.300M4.700 10.700V13.100M7 9H9.400M7 14.800H9.400" stroke="#9a9a9a" stroke-width="0.900"/><rect x="2.400" y="1.400" width="11.200" height="3.400" stroke="#3c3c3c" stroke-width="1.100"/><rect x="2.400" y="7.300" width="4.600" height="3.400" stroke="#8a8a8a" stroke-width="1"/><rect x="9.400" y="7.300" width="8.800" height="3.400" stroke="#3c3c3c" stroke-width="1.100"/><rect x="2.400" y="13.100" width="4.600" height="3.400" stroke="#8a8a8a" stroke-width="1"/><rect x="9.400" y="13.100" width="8.800" height="3.400" stroke="#3c3c3c" stroke-width="1.100"/></svg>
<span class="tx" style="top:537.26px;font-size:11.33px;-webkit-text-stroke:0.18px;left:38.30px;transform:scaleX(0.9746);">Wyszukiwanie wg parametrów kartotek</span>
<div class="abs" style="left:0px;top:561px;width:298px;height:30px;background:#ddeef9;"></div>
<div class="abs" style="left:294px;top:561px;width:3.5px;height:30px;background:#0b6fb3"></div>
<svg class="abs" style="left:10px;top:566px;" width="20" height="18" viewBox="0 0 20 18" fill="none"><path d="M4.700 4.800V7.300M4.700 10.700V13.100M7 9H9.400M7 14.800H9.400" stroke="#9a9a9a" stroke-width="0.900"/><rect x="2.400" y="1.400" width="11.200" height="3.400" stroke="#3c3c3c" stroke-width="1.100"/><rect x="2.400" y="7.300" width="4.600" height="3.400" stroke="#8a8a8a" stroke-width="1"/><rect x="9.400" y="7.300" width="8.800" height="3.400" stroke="#3c3c3c" stroke-width="1.100"/><rect x="2.400" y="13.100" width="4.600" height="3.400" stroke="#8a8a8a" stroke-width="1"/><rect x="9.400" y="13.100" width="8.800" height="3.400" stroke="#3c3c3c" stroke-width="1.100"/></svg>
<span class="tx" style="top:567.26px;font-size:11.33px;-webkit-text-stroke:0.18px;left:38.30px;transform:scaleX(0.9746);">Wyszukiwanie wg parametrów grup kartotek</span>
<div class="abs" style="left:297px;top:120px;width:1px;height:471px;background:#e4e4e4"></div>
<div class="abs" style="left:298px;top:120px;width:3.5px;height:471px;background:#f9f9f9"></div>
<div class="abs" style="left:302px;top:119px;width:498px;height:472px;background:#fff"></div>
<div class="abs" style="left:302px;top:119px;width:483px;height:41px;background:#faf9f8;border-top:1px solid #dcdcdc;border-bottom:1px solid #cbcbcb"></div>
<div class="abs" style="left:301px;top:119px;width:1px;height:472px;background:#dcdcdc"></div>
<div class="abs" style="left:349px;top:120px;width:1px;height:39px;background:#ededed"></div>
<div class="abs" style="left:515px;top:120px;width:1px;height:39px;background:#ededed"></div>
<div class="abs" style="left:498.5px;top:120px;width:17.5px;height:20px;background:#faf9f8;border-left:1px solid #e6e6e6;border-bottom:1px solid #e6e6e6"></div>
<svg class="abs" style="left:500.3px;top:122px;" width="14" height="15" viewBox="0 0 14 15" fill="none"><path d="M7 12.500V3M3.500 6.300L7 2.800L10.500 6.300" stroke="#444" stroke-width="1.100" stroke-linecap="round" stroke-linejoin="round"/></svg>
<span class="tx" style="top:121.20px;font-size:11.5px;color:#2a2a2a;-webkit-text-stroke:0.15px;left:353.80px;transform:scaleX(0.93);">Symbol</span>
<span class="tx" style="top:121.20px;font-size:11.5px;color:#2a2a2a;-webkit-text-stroke:0.15px;left:519.60px;transform:scaleX(0.93);">Opis</span>
<div class="ub" style="left:308px;top:145px;border-color:#b9b9b9"></div>
<div class="abs" style="left:0;top:0;width:785px;height:576px;overflow:hidden"><div class="abs" style="left:350px;top:160px;width:166px;height:416px;background:#ffffe1"></div><div class="abs" style="left:327.5px;top:160px;width:1px;height:416px;background:#ececec"></div><div class="abs" style="left:302px;top:179px;width:484px;height:1px;background:#ededed"></div><div class="ub" style="left:308px;top:164px"></div><div class="or" style="left:333px;top:165px"></div><span class="tx" style="top:162.26px;font-size:11.33px;-webkit-text-stroke:0.18px;left:357.00px;transform:scaleX(0.9746);">!TECH!</span><span class="tx" style="top:162.26px;font-size:11.33px;-webkit-text-stroke:0.18px;left:522.90px;transform:scaleX(0.9714);">Symkar techniczny</span><div class="abs" style="left:302px;top:199px;width:484px;height:1px;background:#ededed"></div><div class="ub" style="left:308px;top:184px"></div><div class="or" style="left:333px;top:185px"></div><span class="tx" style="top:182.26px;font-size:11.33px;-webkit-text-stroke:0.18px;left:357.00px;transform:scaleX(0.9746);">1009</span><span class="tx" style="top:182.26px;font-size:11.33px;-webkit-text-stroke:0.18px;left:522.90px;transform:scaleX(0.9714);">Mocowanie, zacisk hamulcowy</span><div class="abs" style="left:302px;top:219px;width:484px;height:1px;background:#ededed"></div><div class="ub" style="left:308px;top:204px"></div><div class="or" style="left:333px;top:205px"></div><span class="tx" style="top:202.26px;font-size:11.33px;-webkit-text-stroke:0.18px;left:357.00px;transform:scaleX(0.9746);">1162</span><span class="tx" style="top:202.26px;font-size:11.33px;-webkit-text-stroke:0.18px;left:522.90px;transform:scaleX(0.9714);">Blacha, trzon osadzenia hamulca</span><div class="abs" style="left:302px;top:239px;width:484px;height:1px;background:#ededed"></div><div class="ub" style="left:308px;top:224px"></div><div class="or" style="left:333px;top:225px"></div><span class="tx" style="top:222.26px;font-size:11.33px;-webkit-text-stroke:0.18px;left:357.00px;transform:scaleX(0.9746);">1165</span><span class="tx" style="top:222.26px;font-size:11.33px;-webkit-text-stroke:0.18px;left:522.90px;transform:scaleX(0.9714);">Zestaw tulei prowadzących, zacisk hamulca</span><div class="abs" style="left:302px;top:259px;width:484px;height:1px;background:#ededed"></div><div class="ub" style="left:308px;top:244px"></div><div class="or" style="left:333px;top:245px"></div><span class="tx" style="top:242.26px;font-size:11.33px;-webkit-text-stroke:0.18px;left:357.00px;transform:scaleX(0.9746);">120426</span><span class="tx" style="top:242.26px;font-size:11.33px;-webkit-text-stroke:0.18px;left:522.90px;transform:scaleX(0.9714);">AM mięso mielone wieprzowe - tacka</span><div class="abs" style="left:302px;top:279px;width:484px;height:1px;background:#ededed"></div><div class="ub" style="left:308px;top:264px"></div><div class="or" style="left:333px;top:265px"></div><span class="tx" style="top:262.26px;font-size:11.33px;-webkit-text-stroke:0.18px;left:357.00px;transform:scaleX(0.9746);">133</span><span class="tx" style="top:262.26px;font-size:11.33px;-webkit-text-stroke:0.18px;left:522.90px;transform:scaleX(0.9714);">Uszczelka, filtr oleju</span><div class="abs" style="left:302px;top:299px;width:484px;height:1px;background:#ededed"></div><div class="ub" style="left:308px;top:284px"></div><div class="or" style="left:333px;top:285px"></div><span class="tx" style="top:282.26px;font-size:11.33px;-webkit-text-stroke:0.18px;left:357.00px;transform:scaleX(0.9746);">1546</span><span class="tx" style="top:282.26px;font-size:11.33px;-webkit-text-stroke:0.18px;left:522.90px;transform:scaleX(0.9714);">żruba, zacisk hamulcowy</span><div class="abs" style="left:302px;top:319px;width:484px;height:1px;background:#ededed"></div><div class="ub" style="left:308px;top:304px"></div><div class="or" style="left:333px;top:305px"></div><span class="tx" style="top:302.26px;font-size:11.33px;-webkit-text-stroke:0.18px;left:357.00px;transform:scaleX(0.9746);">1724</span><span class="tx" style="top:302.26px;font-size:11.33px;-webkit-text-stroke:0.18px;left:522.90px;transform:scaleX(0.9714);">Uszczelka, tłoczek hamulcowy</span><div class="abs" style="left:302px;top:339px;width:484px;height:1px;background:#ededed"></div><div class="ub" style="left:308px;top:324px"></div><div class="or" style="left:333px;top:325px"></div><span class="tx" style="top:322.26px;font-size:11.33px;-webkit-text-stroke:0.18px;left:357.00px;transform:scaleX(0.9746);">2169</span><span class="tx" style="top:322.26px;font-size:11.33px;-webkit-text-stroke:0.18px;left:522.90px;transform:scaleX(0.9714);">Sworzeń prowadzący, zacisk hamulca</span><div class="abs" style="left:302px;top:359px;width:484px;height:1px;background:#ededed"></div><div class="ub" style="left:308px;top:344px"></div><div class="or" style="left:333px;top:345px"></div><span class="tx" style="top:342.26px;font-size:11.33px;-webkit-text-stroke:0.18px;left:357.00px;transform:scaleX(0.9746);">2170</span><span class="tx" style="top:342.26px;font-size:11.33px;-webkit-text-stroke:0.18px;left:522.90px;transform:scaleX(0.9714);">Tuleja prowadząca, zacisk hamulcowy</span><div class="abs" style="left:302px;top:379px;width:484px;height:1px;background:#ededed"></div><div class="ub" style="left:308px;top:364px"></div><div class="or" style="left:333px;top:365px"></div><span class="tx" style="top:362.26px;font-size:11.33px;-webkit-text-stroke:0.18px;left:357.00px;transform:scaleX(0.9746);">2247</span><span class="tx" style="top:362.26px;font-size:11.33px;-webkit-text-stroke:0.18px;left:522.90px;transform:scaleX(0.9714);">Osłona, zacisk hamulca</span><div class="abs" style="left:302px;top:399px;width:484px;height:1px;background:#ededed"></div><div class="ub" style="left:308px;top:384px"></div><div class="or" style="left:333px;top:385px"></div><span class="tx" style="top:382.26px;font-size:11.33px;-webkit-text-stroke:0.18px;left:357.00px;transform:scaleX(0.9746);">2248</span><span class="tx" style="top:382.26px;font-size:11.33px;-webkit-text-stroke:0.18px;left:522.90px;transform:scaleX(0.9714);">Tłoczek, zacisk hamulca</span><div class="abs" style="left:302px;top:419px;width:484px;height:1px;background:#ededed"></div><div class="ub" style="left:308px;top:404px"></div><div class="or" style="left:333px;top:405px"></div><span class="tx" style="top:402.26px;font-size:11.33px;-webkit-text-stroke:0.18px;left:357.00px;transform:scaleX(0.9746);">2296</span><span class="tx" style="top:402.26px;font-size:11.33px;-webkit-text-stroke:0.18px;left:522.90px;transform:scaleX(0.9714);">Sprężyna, zacisk hamulca</span><div class="abs" style="left:302px;top:439px;width:484px;height:1px;background:#ededed"></div><div class="ub" style="left:308px;top:424px"></div><div class="or" style="left:333px;top:425px"></div><span class="tx" style="top:422.26px;font-size:11.33px;-webkit-text-stroke:0.18px;left:357.00px;transform:scaleX(0.9746);">2459</span><span class="tx" style="top:422.26px;font-size:11.33px;-webkit-text-stroke:0.18px;left:522.90px;transform:scaleX(0.9714);">wkład filtra, filtr wymienny</span><div class="abs" style="left:302px;top:459px;width:484px;height:1px;background:#ededed"></div><div class="ub" style="left:308px;top:444px"></div><div class="or" style="left:333px;top:445px"></div><span class="tx" style="top:442.26px;font-size:11.33px;-webkit-text-stroke:0.18px;left:357.00px;transform:scaleX(0.9746);">2470</span><span class="tx" style="top:442.26px;font-size:11.33px;-webkit-text-stroke:0.18px;left:522.90px;transform:scaleX(0.9714);">Filtr powietrza wtórnego</span><div class="abs" style="left:302px;top:479px;width:484px;height:1px;background:#ededed"></div><div class="ub" style="left:308px;top:464px"></div><div class="or" style="left:333px;top:465px"></div><span class="tx" style="top:462.26px;font-size:11.33px;-webkit-text-stroke:0.18px;left:357.00px;transform:scaleX(0.9746);">2513</span><span class="tx" style="top:462.26px;font-size:11.33px;-webkit-text-stroke:0.18px;left:522.90px;transform:scaleX(0.9714);">Zestaw dodatków, zacisk hamulcowy</span><div class="abs" style="left:302px;top:499px;width:484px;height:1px;background:#ededed"></div><div class="ub" style="left:308px;top:484px"></div><div class="or" style="left:333px;top:485px"></div><span class="tx" style="top:482.26px;font-size:11.33px;-webkit-text-stroke:0.18px;left:357.00px;transform:scaleX(0.9746);">256</span><span class="tx" style="top:482.26px;font-size:11.33px;-webkit-text-stroke:0.18px;left:522.90px;transform:scaleX(0.9714);">Sprężyna, klocek hamulcowy</span><div class="abs" style="left:302px;top:519px;width:484px;height:1px;background:#ededed"></div><div class="ub" style="left:308px;top:504px"></div><div class="or" style="left:333px;top:505px"></div><span class="tx" style="top:502.26px;font-size:11.33px;-webkit-text-stroke:0.18px;left:357.00px;transform:scaleX(0.9746);">3418</span><span class="tx" style="top:502.26px;font-size:11.33px;-webkit-text-stroke:0.18px;left:522.90px;transform:scaleX(0.9714);">Zestaw naprawczy, dYwignia hamulca postojowego (z</span><div class="abs" style="left:302px;top:539px;width:484px;height:1px;background:#ededed"></div><div class="ub" style="left:308px;top:524px"></div><div class="or" style="left:333px;top:525px"></div><span class="tx" style="top:522.26px;font-size:11.33px;-webkit-text-stroke:0.18px;left:357.00px;transform:scaleX(0.9746);">3502</span><span class="tx" style="top:522.26px;font-size:11.33px;-webkit-text-stroke:0.18px;left:522.90px;transform:scaleX(0.9714);">Filtr oleju, mechanizm różnicowy</span><div class="abs" style="left:302px;top:559px;width:484px;height:1px;background:#ededed"></div><div class="ub" style="left:308px;top:544px"></div><div class="or" style="left:333px;top:545px"></div><span class="tx" style="top:542.26px;font-size:11.33px;-webkit-text-stroke:0.18px;left:357.00px;transform:scaleX(0.9746);">3883</span><span class="tx" style="top:542.26px;font-size:11.33px;-webkit-text-stroke:0.18px;left:522.90px;transform:scaleX(0.9714);">Sportowy filtr powietrza</span><div class="abs" style="left:302px;top:579px;width:484px;height:1px;background:#ededed"></div><div class="ub" style="left:308px;top:564px"></div><div class="or" style="left:333px;top:565px"></div><span class="tx" style="top:562.26px;font-size:11.33px;-webkit-text-stroke:0.18px;left:357.00px;transform:scaleX(0.9746);">3884</span><span class="tx" style="top:562.26px;font-size:11.33px;-webkit-text-stroke:0.18px;left:522.90px;transform:scaleX(0.9714);">Sportowy system filtrowania powietrza</span><div class="abs" style="left:302px;top:160px;width:484px;height:1px;background:#51626b"></div><div class="abs" style="left:302px;top:179px;width:484px;height:1px;background:#51626b"></div><div class="abs" style="left:302px;top:160px;width:1.6px;height:20px;background:#0b6fb3"></div><div class="abs" style="left:304px;top:161px;width:24px;height:18px;background:#efefef"></div><div class="ub" style="left:308px;top:164px"></div><div class="abs" style="left:350px;top:160px;width:166px;height:20px;border:2px solid #0b6fb3"></div></div>
<div class="abs" style="left:785px;top:160px;width:12.5px;height:416px;background:#fdfdfd;border-left:1px solid #eeeeee"></div>
<div class="abs" style="left:789px;top:186px;width:6.5px;height:66.5px;background:#dbdbdb"></div>
<svg class="abs" style="left:788px;top:566px;" width="10" height="8" viewBox="0 0 10 8" fill="none"><path d="M1.500 2L5 6L8.500 2" stroke="#d6d6d6" stroke-width="1"/></svg>
<div class="abs" style="left:302px;top:576px;width:495px;height:14.5px;background:#f9f9f9;border-top:1px solid #e6e6e6;border-left:1px solid #dcdcdc"></div>
<div class="abs" style="left:312px;top:580px;width:233px;height:6.5px;background:#dadada"></div>
<svg class="abs" style="left:303px;top:578px;" width="8" height="10" viewBox="0 0 8 10" fill="none"><path d="M6 1.500L2.500 5L6 8.500" stroke="#d6d6d6" stroke-width="1"/></svg>
<svg class="abs" style="left:775px;top:578px;" width="8" height="10" viewBox="0 0 8 10" fill="none"><path d="M2 1.500L5.500 5L2 8.500" stroke="#d6d6d6" stroke-width="1"/></svg>
<div class="abs" style="left:785px;top:576px;width:12.5px;height:14.5px;background:#f0f0ef"></div>
<div class="abs" style="left:797.5px;top:119px;width:1.5px;height:472px;background:#f4f4f4"></div>
<div class="abs" style="left:799px;top:119px;width:201px;height:472px;background:#fff;border-left:1px solid #dcdcdc;border-top:1px solid #dcdcdc"></div>
<span class="tx" style="top:181.96px;font-size:11.33px;color:#1c1c1c;-webkit-text-stroke:0.35px;right:106.00px;transform-origin:100% 50%;transform:scaleX(0.9746);">handlowy</span>
<span class="tx" style="top:201.96px;font-size:11.33px;color:#1c1c1c;-webkit-text-stroke:0.35px;right:106.00px;transform-origin:100% 50%;transform:scaleX(0.9746);">Stawka VAT</span>
<span class="tx" style="top:201.96px;font-size:11.33px;-webkit-text-stroke:0.18px;left:904.50px;transform:scaleX(0.9746);">23%</span>
<span class="tx" style="top:221.96px;font-size:11.33px;color:#1c1c1c;-webkit-text-stroke:0.35px;right:106.00px;transform-origin:100% 50%;transform:scaleX(0.9746);">CN</span>
<span class="tx" style="top:221.96px;font-size:11.33px;font-style:italic;color:#9b9b9b;-webkit-text-stroke:0.18px;left:904.50px;transform:scaleX(0.9216);">brak danych</span>
<span class="tx" style="top:242.26px;font-size:11.33px;color:#1c1c1c;-webkit-text-stroke:0.35px;right:106.00px;transform-origin:100% 50%;transform:scaleX(0.9746);">Numer</span>
<span class="tx" style="top:242.26px;font-size:11.33px;font-style:italic;color:#9b9b9b;-webkit-text-stroke:0.18px;left:904.50px;transform:scaleX(0.9216);">brak danych</span>
<span class="tx" style="top:255.26px;font-size:11.33px;color:#1c1c1c;-webkit-text-stroke:0.35px;right:106.00px;transform-origin:100% 50%;transform:scaleX(0.9746);">katalogowy</span>
<span class="tx" style="top:275.76px;font-size:11.33px;color:#1c1c1c;-webkit-text-stroke:0.35px;right:106.00px;transform-origin:100% 50%;transform:scaleX(0.9746);">Kod kreskowy</span>
<span class="tx" style="top:275.76px;font-size:11.33px;font-style:italic;color:#9b9b9b;-webkit-text-stroke:0.18px;left:904.50px;transform:scaleX(0.9216);">brak danych</span>
<span class="tx" style="top:296.26px;font-size:11.33px;color:#1c1c1c;-webkit-text-stroke:0.35px;right:106.00px;transform-origin:100% 50%;transform:scaleX(0.9746);">Istnieje</span>
<span class="tx" style="top:309.26px;font-size:11.33px;color:#1c1c1c;-webkit-text-stroke:0.35px;right:106.00px;transform-origin:100% 50%;transform:scaleX(0.9746);">zamiennik</span>
<div class="ub" style="left:905px;top:305px;border-color:#c9c9c9"></div>
<span class="tx" style="top:329.26px;font-size:11.33px;color:#1c1c1c;-webkit-text-stroke:0.35px;right:106.00px;transform-origin:100% 50%;transform:scaleX(0.9746);">Stan</span>
<span class="tx" style="top:329.26px;font-size:11.33px;-webkit-text-stroke:0.18px;left:904.50px;transform:scaleX(0.9746);">0</span>
<span class="tx" style="top:342.26px;font-size:11.33px;color:#1c1c1c;-webkit-text-stroke:0.35px;right:106.00px;transform-origin:100% 50%;transform:scaleX(0.9746);">Rezerwacje</span>
<span class="tx" style="top:385.76px;font-size:11.33px;color:#858585;-webkit-text-stroke:0.18px;left:810.30px;transform:scaleX(0.9958);">Klasyfikacja</span>
<div class="abs" style="left:810px;top:405px;width:189px;height:1px;background:#dedede"></div>
<span class="tx" style="top:412.26px;font-size:11.33px;color:#1c1c1c;-webkit-text-stroke:0.35px;right:106.00px;transform-origin:100% 50%;transform:scaleX(0.9746);">Rodzajowa</span>
<span class="tx" style="top:412.26px;font-size:11.33px;font-style:italic;color:#9b9b9b;-webkit-text-stroke:0.18px;left:904.50px;transform:scaleX(0.9216);">brak danych</span>
<span class="tx" style="top:432.26px;font-size:11.33px;color:#1c1c1c;-webkit-text-stroke:0.35px;right:106.00px;transform-origin:100% 50%;transform:scaleX(0.9746);">Rabatowa</span>
<span class="tx" style="top:432.26px;font-size:11.33px;font-style:italic;color:#9b9b9b;-webkit-text-stroke:0.18px;left:904.50px;transform:scaleX(0.9216);">brak danych</span>
<span class="tx" style="top:452.26px;font-size:11.33px;color:#1c1c1c;-webkit-text-stroke:0.35px;right:106.00px;transform-origin:100% 50%;transform:scaleX(0.9746);">Magazynowa</span>
<span class="tx" style="top:452.26px;font-size:11.33px;font-style:italic;color:#9b9b9b;-webkit-text-stroke:0.18px;left:904.50px;transform:scaleX(0.9216);">brak danych</span>
<div class="abs" style="left:810px;top:482px;width:189px;height:1px;background:#dedede"></div>
<span class="tx" style="top:493.76px;font-size:11.33px;color:#1c1c1c;-webkit-text-stroke:0.35px;right:106.00px;transform-origin:100% 50%;transform:scaleX(0.9746);">Kod ASIN</span>
<span class="tx" style="top:493.76px;font-size:11.33px;font-style:italic;color:#9b9b9b;-webkit-text-stroke:0.18px;left:904.50px;transform:scaleX(0.9216);">brak danych</span>
<div class="abs" style="left:736px;top:84px;width:263.7px;height:101.7px;background:#fff;border:1px solid #bdbdbd;border-top-color:#e6e6e6;box-shadow:0 1px 2px rgba(0,0,0,.06);z-index:70"><div class="abs" style="left:6px;top:76px;width:16px;height:16px;background:#ddeef9"></div><svg class="abs" style="left:8px;top:78px;" width="12" height="12" viewBox="0 0 12 12" fill="none"><path d="M2 6.300L4.800 9L10 3.300" stroke="#1e8fdd" stroke-width="1.500" stroke-linecap="round" stroke-linejoin="round"/></svg><span class="tx" style="top:7.06px;font-size:11.33px;-webkit-text-stroke:0.18px;left:37.20px;transform:scaleX(0.9746);">Wyszukiwanie wg grup kartotek</span><span class="tx" style="top:30.06px;font-size:11.33px;-webkit-text-stroke:0.18px;left:37.20px;transform:scaleX(0.9746);">Wyszukiwanie wg grup asortymentu</span><span class="tx" style="top:53.06px;font-size:11.33px;-webkit-text-stroke:0.18px;left:37.20px;transform:scaleX(0.9746);">Wyszukiwanie wg parametrów kartotek</span><span class="tx" style="top:76.06px;font-size:11.33px;-webkit-text-stroke:0.18px;left:37.20px;transform:scaleX(0.9746);">Wyszukiwanie wg parametrów grup kartotek</span></div>
<div class="abs" style="left:0px;top:590px;width:1000px;height:33px;background:#faf9f8;border-top:1px solid #e0e0e0"></div>
<div class="abs" style="left:0px;top:621px;width:1000px;height:1px;background:#dcdcdc"></div>
<div class="abs" style="left:494px;top:592.5px;width:10px;height:1px;background:#c4c4c4"></div>
<span class="tx" style="top:599.06px;font-size:11.33px;font-weight:bold;color:#2a2a2a;left:11.20px;transform:scaleX(0.9269);">Analiza</span>
<svg class="abs" style="left:50px;top:603px;" width="11" height="8" viewBox="0 0 11 8" fill="none"><path d="M1.800 2L5.300 5.500L8.800 2" stroke="#444" stroke-width="1.100" stroke-linecap="round" stroke-linejoin="round"/></svg>
<svg class="abs" style="left:70px;top:598px;" width="10" height="16" viewBox="0 0 10 16" fill="none"><path d="M7.500 2L2.500 14" stroke="#dadada" stroke-width="1.100" stroke-linecap="round"/></svg>
<svg class="abs" style="left:88px;top:600px;" width="10" height="12" viewBox="0 0 10 12" fill="none"><path d="M6.500 1.800L2.800 6L6.500 10.200" stroke="#dedede" stroke-width="1.100" stroke-linecap="round" stroke-linejoin="round"/></svg>
<svg class="abs" style="left:984px;top:600px;" width="10" height="12" viewBox="0 0 10 12" fill="none"><path d="M3 1.800L6.700 6L3 10.200" stroke="#bdbdbd" stroke-width="1.100" stroke-linecap="round" stroke-linejoin="round"/></svg>
<span class="tx" style="top:599.06px;font-size:11.33px;font-weight:bold;color:#2a2a2a;left:118.50px;transform:scaleX(0.9184);">Stany magazynowe</span>
<div class="abs" style="left:117px;top:618px;width:99px;height:3px;background:#0486d2"></div>
<span class="tx" style="top:599.06px;font-size:11.33px;color:#4a4a4a;-webkit-text-stroke:0.18px;left:246.00px;transform:scaleX(0.9746);">Historia zmiany cen</span>
<span class="tx" style="top:599.06px;font-size:11.33px;color:#4a4a4a;-webkit-text-stroke:0.18px;left:374.00px;transform:scaleX(0.9746);">Obroty</span>
<span class="tx" style="top:599.06px;font-size:11.33px;color:#4a4a4a;-webkit-text-stroke:0.18px;left:438.00px;transform:scaleX(0.9746);">Linijki cenników</span>
<span class="tx" style="top:599.06px;font-size:11.33px;color:#4a4a4a;-webkit-text-stroke:0.18px;left:548.00px;transform:scaleX(0.9746);">Historia zmian statusów</span>
<span class="tx" style="top:599.06px;font-size:11.33px;color:#4a4a4a;-webkit-text-stroke:0.18px;left:700.50px;transform:scaleX(0.9746);">Linijki stanów dynamicznych</span>
<span class="tx" style="top:599.06px;font-size:11.33px;color:#4a4a4a;-webkit-text-stroke:0.18px;left:873.00px;transform:scaleX(0.9746);">Stany dynamiczne</span>
<div class="abs" style="left:0px;top:0px;width:1000px;height:1px;background:#028cd5;z-index:60"></div>
<div class="abs" style="left:0px;top:0px;width:1.25px;height:625px;background:#028cd5;z-index:60"></div>
<div class="abs" style="left:998.6px;top:0px;width:1.4px;height:625px;background:#028cd5;z-index:60"></div>
<div class="abs" style="left:0px;top:622px;width:1000px;height:3px;background:#fdfdfd;z-index:59"></div>
<div class="abs" style="left:0px;top:623.75px;width:1000px;height:1.25px;background:#028cd5;z-index:60"></div>
</div>
</body>
</html>
